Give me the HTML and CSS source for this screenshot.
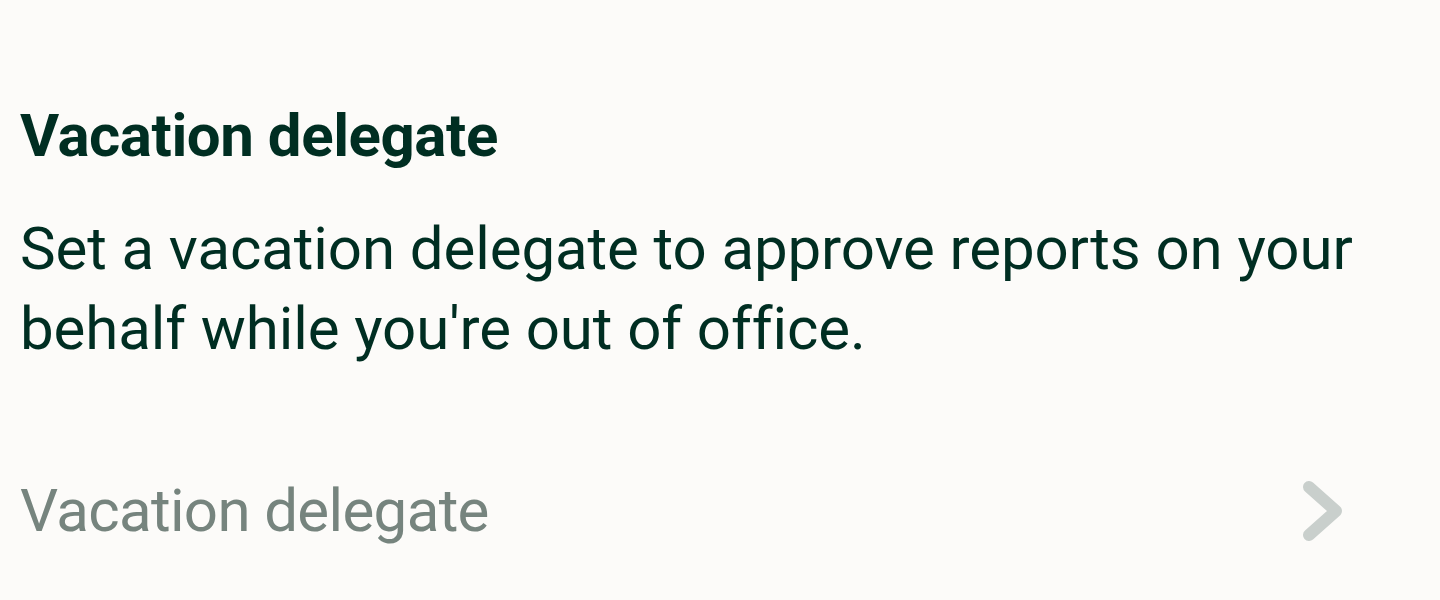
FILE: index.html
```html
<!DOCTYPE html>
<html lang="en">
<head>
<meta charset="utf-8">
<title>Vacation delegate</title>
<link rel="stylesheet" href="styles.css">
</head>
<body>
<section class="section">
  <h2 class="title">Vacation delegate</h2>
  <p class="desc">Set a vacation delegate to approve reports on your behalf while you're out of office.</p>
  <div class="row">
    <span class="row-label">Vacation delegate</span>
    <svg class="chevron" width="48" height="60" viewBox="0 0 48 60" aria-hidden="true">
      <path d="M9 6 L36 30 L9 54" fill="none" stroke="#c9cfcc" stroke-width="12" stroke-linecap="round" stroke-linejoin="round"/>
    </svg>
  </div>
</section>
</body>
</html>
```

FILE: styles.css
```css
html, body {
  margin: 0;
  padding: 0;
  background: #fcfbf9;
}

body {
  font-family: Roboto, "Liberation Sans", sans-serif;
  color: #002e22;
}

.section {
  padding: 96px 20px 0 20px;
}

.title {
  margin: 0;
  font-size: 60px;
  line-height: 80px;
  font-weight: 700;
  letter-spacing: -0.45px;
}

.desc {
  margin: 33px 0 0 0;
  font-size: 60px;
  line-height: 80px;
  font-weight: 400;
  letter-spacing: -0.1px;
}

.row {
  margin-top: 102px;
  display: flex;
  align-items: center;
  justify-content: space-between;
  padding-right: 72px;
}

.row-label {
  font-size: 60px;
  line-height: 80px;
  color: #76847e;
  letter-spacing: -0.65px;
}

.chevron {
  display: block;
}
```
